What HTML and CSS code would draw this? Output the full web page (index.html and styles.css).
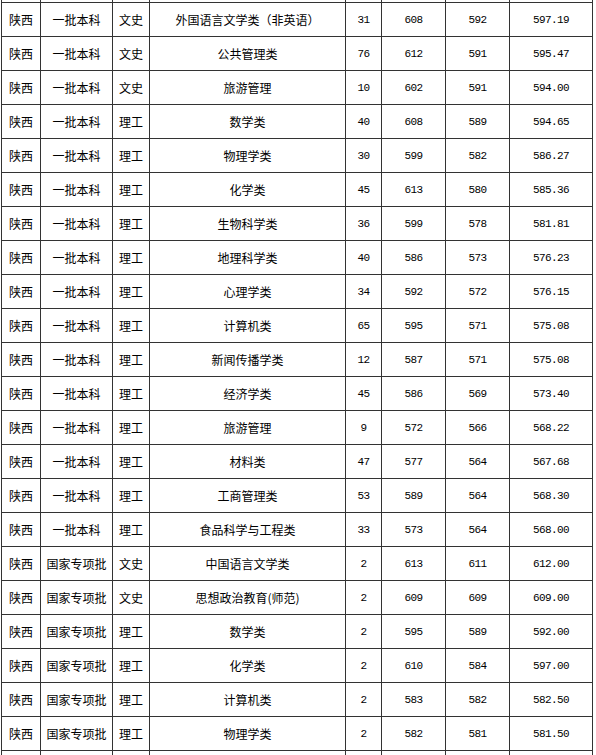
FILE: index.html
```html
<!DOCTYPE html>
<html lang="zh">
<head>
<meta charset="utf-8">
<title>录取分数</title>
<link rel="stylesheet" href="styles.css">
</head>
<body>
<div class="wrap">
<table class="scores">
<colgroup>
<col class="c1"><col class="c2"><col class="c3"><col class="c4"><col class="c5"><col class="c6"><col class="c7"><col class="c8">
</colgroup>
<tbody>
<tr class="cut"><td></td><td></td><td></td><td></td><td></td><td></td><td></td><td></td></tr>
<tr><td>陕西</td><td>一批本科</td><td>文史</td><td>外国语言文学类（非英语）</td><td class="n">31</td><td class="n">608</td><td class="n">592</td><td class="n">597.19</td></tr>
<tr><td>陕西</td><td>一批本科</td><td>文史</td><td>公共管理类</td><td class="n">76</td><td class="n">612</td><td class="n">591</td><td class="n">595.47</td></tr>
<tr><td>陕西</td><td>一批本科</td><td>文史</td><td>旅游管理</td><td class="n">10</td><td class="n">602</td><td class="n">591</td><td class="n">594.00</td></tr>
<tr><td>陕西</td><td>一批本科</td><td>理工</td><td>数学类</td><td class="n">40</td><td class="n">608</td><td class="n">589</td><td class="n">594.65</td></tr>
<tr><td>陕西</td><td>一批本科</td><td>理工</td><td>物理学类</td><td class="n">30</td><td class="n">599</td><td class="n">582</td><td class="n">586.27</td></tr>
<tr><td>陕西</td><td>一批本科</td><td>理工</td><td>化学类</td><td class="n">45</td><td class="n">613</td><td class="n">580</td><td class="n">585.36</td></tr>
<tr><td>陕西</td><td>一批本科</td><td>理工</td><td>生物科学类</td><td class="n">36</td><td class="n">599</td><td class="n">578</td><td class="n">581.81</td></tr>
<tr><td>陕西</td><td>一批本科</td><td>理工</td><td>地理科学类</td><td class="n">40</td><td class="n">586</td><td class="n">573</td><td class="n">576.23</td></tr>
<tr><td>陕西</td><td>一批本科</td><td>理工</td><td>心理学类</td><td class="n">34</td><td class="n">592</td><td class="n">572</td><td class="n">576.15</td></tr>
<tr><td>陕西</td><td>一批本科</td><td>理工</td><td>计算机类</td><td class="n">65</td><td class="n">595</td><td class="n">571</td><td class="n">575.08</td></tr>
<tr><td>陕西</td><td>一批本科</td><td>理工</td><td>新闻传播学类</td><td class="n">12</td><td class="n">587</td><td class="n">571</td><td class="n">575.08</td></tr>
<tr><td>陕西</td><td>一批本科</td><td>理工</td><td>经济学类</td><td class="n">45</td><td class="n">586</td><td class="n">569</td><td class="n">573.40</td></tr>
<tr><td>陕西</td><td>一批本科</td><td>理工</td><td>旅游管理</td><td class="n">9</td><td class="n">572</td><td class="n">566</td><td class="n">568.22</td></tr>
<tr><td>陕西</td><td>一批本科</td><td>理工</td><td>材料类</td><td class="n">47</td><td class="n">577</td><td class="n">564</td><td class="n">567.68</td></tr>
<tr><td>陕西</td><td>一批本科</td><td>理工</td><td>工商管理类</td><td class="n">53</td><td class="n">589</td><td class="n">564</td><td class="n">568.30</td></tr>
<tr><td>陕西</td><td>一批本科</td><td>理工</td><td>食品科学与工程类</td><td class="n">33</td><td class="n">573</td><td class="n">564</td><td class="n">568.00</td></tr>
<tr><td>陕西</td><td>国家专项批</td><td>文史</td><td>中国语言文学类</td><td class="n">2</td><td class="n">613</td><td class="n">611</td><td class="n">612.00</td></tr>
<tr><td>陕西</td><td>国家专项批</td><td>文史</td><td>思想政治教育(师范)</td><td class="n">2</td><td class="n">609</td><td class="n">609</td><td class="n">609.00</td></tr>
<tr><td>陕西</td><td>国家专项批</td><td>理工</td><td>数学类</td><td class="n">2</td><td class="n">595</td><td class="n">589</td><td class="n">592.00</td></tr>
<tr><td>陕西</td><td>国家专项批</td><td>理工</td><td>化学类</td><td class="n">2</td><td class="n">610</td><td class="n">584</td><td class="n">597.00</td></tr>
<tr><td>陕西</td><td>国家专项批</td><td>理工</td><td>计算机类</td><td class="n">2</td><td class="n">583</td><td class="n">582</td><td class="n">582.50</td></tr>
<tr><td>陕西</td><td>国家专项批</td><td>理工</td><td>物理学类</td><td class="n">2</td><td class="n">582</td><td class="n">581</td><td class="n">581.50</td></tr>
<tr class="cut"><td></td><td></td><td></td><td></td><td></td><td></td><td></td><td></td></tr>
</tbody>
</table>
</div>
</body>
</html>
```

FILE: styles.css
```css
html, body {
  margin: 0;
  padding: 0;
  background: #ffffff;
}
.wrap {
  height: 755px;
  overflow: hidden;
  padding-left: 1px;
}
.scores {
  margin-top: -32px;
  border-collapse: collapse;
  table-layout: fixed;
  width: 592px;
  font-family: "Noto Sans CJK SC", "Liberation Sans", sans-serif;
  font-size: 12px;
  color: #000000;
}
.scores td {
  border: 1px solid #333333;
  height: 33px;
  padding: 0;
  text-align: center;
  vertical-align: middle;
  line-height: 14px;
  white-space: nowrap;
  overflow: hidden;
}
.scores td.n {
  font-family: "Liberation Mono", "DejaVu Sans Mono", monospace;
  font-size: 11px;
  letter-spacing: -0.6px;
}
.c1 { width: 39px; }
.c2 { width: 72px; }
.c3 { width: 37px; }
.c4 { width: 196px; }
.c5 { width: 36px; }
.c6 { width: 64px; }
.c7 { width: 64px; }
.c8 { width: 83px; }
```
